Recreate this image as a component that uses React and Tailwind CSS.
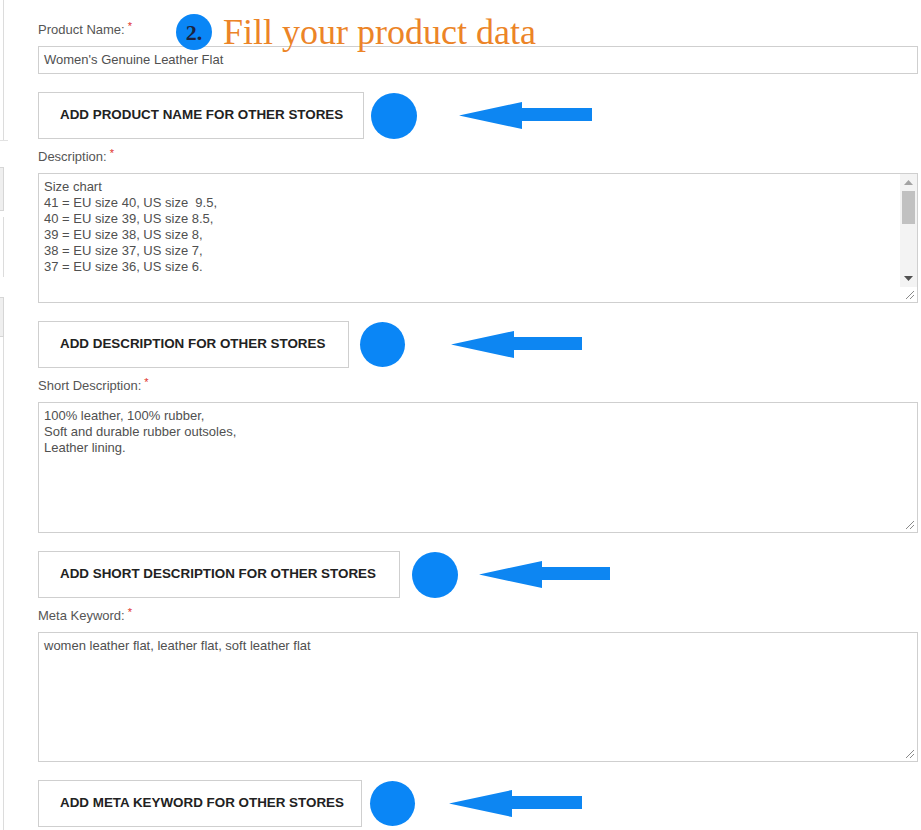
import React from "react";

function Arrow({ w = 133 }) {
  return (
    <svg width={w} height="27" viewBox={`0 0 ${w} 27`} className="shrink-0">
      <polygon
        points={`0,13.5 63,0 63,6 ${w},6 ${w},19 63,19 63,27`}
        fill="#0d86f2"
      />
    </svg>
  );
}

function Grip() {
  return (
    <svg width="10" height="10" viewBox="0 0 10 10" className="absolute right-[2px] bottom-[2px]">
      <line x1="1" y1="9" x2="9" y2="1" stroke="#8a8a8a" strokeWidth="1" />
      <line x1="5" y1="9" x2="9" y2="5" stroke="#8a8a8a" strokeWidth="1" />
    </svg>
  );
}

function Label({ children }) {
  return (
    <div className="h-[16px] leading-[16px] text-[13px] text-[#555]">
      {children}
      <span className="relative -top-[4px] ml-[3px] text-[11px] text-[#e0312b]">*</span>
    </div>
  );
}

function TextBox({ text, scroll, tall }) {
  return (
    <div className={`relative mt-[8px] border border-[#cfcfcf] bg-white ${tall ? "h-[131px]" : "h-[130px]"}`}>
      <div className="whitespace-pre pl-[5px] pt-[5px] text-[13px] leading-[16px] text-[#505050]">
        {text}
      </div>
      {scroll ? (
        <div className="absolute right-0 top-0 flex h-[113px] w-[17px] flex-col items-center bg-[#f3f3f3]">
          <svg width="9" height="6" viewBox="0 0 9 6" className="mt-[6px]">
            <polygon points="0,5 4.5,0 9,5" fill="#a3a3a3" />
          </svg>
          <div className="mt-[5px] h-[33px] w-[13px] bg-[#c1c1c1]" />
          <div className="flex-1" />
          <svg width="9" height="6" viewBox="0 0 9 6" className="mb-[5px]">
            <polygon points="0,0 9,0 4.5,5" fill="#505050" />
          </svg>
        </div>
      ) : null}
      <Grip />
    </div>
  );
}

function ActionRow({ label, btnW, gap1, circle, gap2, arrowW }) {
  return (
    <div className="mt-[18px] flex items-center">
      <div
        className="flex h-[47px] shrink-0 items-center border border-[#cfcfcf] bg-white pl-[21px] text-[13.4px] font-bold text-[#222]"
        style={{ width: btnW }}
      >
        {label}
      </div>
      <div className="shrink-0" style={{ width: gap1 }} />
      <div
        className="shrink-0 rounded-full bg-[#0a86f6]"
        style={{ width: circle, height: circle }}
      />
      <div className="shrink-0" style={{ width: gap2 }} />
      <Arrow w={arrowW} />
    </div>
  );
}

export default function App() {
  return (
    <div className="relative flex h-[830px] w-[921px] overflow-hidden bg-white font-['Liberation_Sans',Arial,sans-serif]">
      {/* left edge strip */}
      <div className="flex w-[38px] shrink-0 flex-col">
        <div className="h-[140px] w-[4px] border-r border-[#dcdcdc]" />
        <div className="h-[1px] w-[8px] bg-[#e2e2e2]" />
        <div className="h-[26px]" />
        <div className="h-[44px] w-[4px] border-y border-r border-[#d6d6d6] bg-[#efefef]" />
        <div className="h-[6px]" />
        <div className="h-[60px] w-[4px] border-r border-[#dcdcdc]" />
        <div className="h-[20px]" />
        <div className="h-[40px] w-[4px] border-y border-r border-[#d6d6d6] bg-[#efefef]" />
        <div className="flex-1 w-[4px] border-r border-[#dcdcdc]" />
      </div>

      <main className="flex-1 pr-[3px] pt-[22px]">
        <Label>Product Name:</Label>
        <div className="mt-[8px] flex h-[28px] items-center border border-[#cfcfcf] bg-white pl-[5px] text-[13px] text-[#505050]">
          Women's Genuine Leather Flat
        </div>
        <ActionRow
          label="ADD PRODUCT NAME FOR OTHER STORES"
          btnW={326}
          gap1={7}
          circle={46}
          gap2={42}
          arrowW={133}
        />

        <div className="mt-[10px]">
          <Label>Description:</Label>
          <TextBox
            scroll
            text={
              "Size chart\n41 = EU size 40, US size  9.5,\n40 = EU size 39, US size 8.5,\n39 = EU size 38, US size 8,\n38 = EU size 37, US size 7,\n37 = EU size 36, US size 6."
            }
          />
          <ActionRow
            label="ADD DESCRIPTION FOR OTHER STORES"
            btnW={311}
            gap1={11}
            circle={45}
            gap2={46}
            arrowW={131}
          />
        </div>

        <div className="mt-[10px]">
          <Label>Short Description:</Label>
          <TextBox
            tall
            text={
              "100% leather, 100% rubber,\nSoft and durable rubber outsoles,\nLeather lining."
            }
          />
          <ActionRow
            label="ADD SHORT DESCRIPTION FOR OTHER STORES"
            btnW={362}
            gap1={12}
            circle={46}
            gap2={21}
            arrowW={131}
          />
        </div>

        <div className="mt-[10px]">
          <Label>Meta Keyword:</Label>
          <TextBox text={"women leather flat, leather flat, soft leather flat"} />
          <ActionRow
            label="ADD META KEYWORD FOR OTHER STORES"
            btnW={324}
            gap1={8}
            circle={45}
            gap2={34}
            arrowW={133}
          />
        </div>
      </main>

      {/* annotation overlay */}
      <div className="absolute left-[176px] top-[13px] flex items-center">
        <div className="flex h-[36px] w-[36px] items-center justify-center rounded-full bg-[#0a86f6] font-['Liberation_Serif',serif] text-[22px] font-bold text-[#1b2340]">
          2.
        </div>
        <div className="ml-[11px] font-['Liberation_Serif',serif] text-[36px] leading-[38px] text-[#ec8427]">
          Fill your product data
        </div>
      </div>
    </div>
  );
}
